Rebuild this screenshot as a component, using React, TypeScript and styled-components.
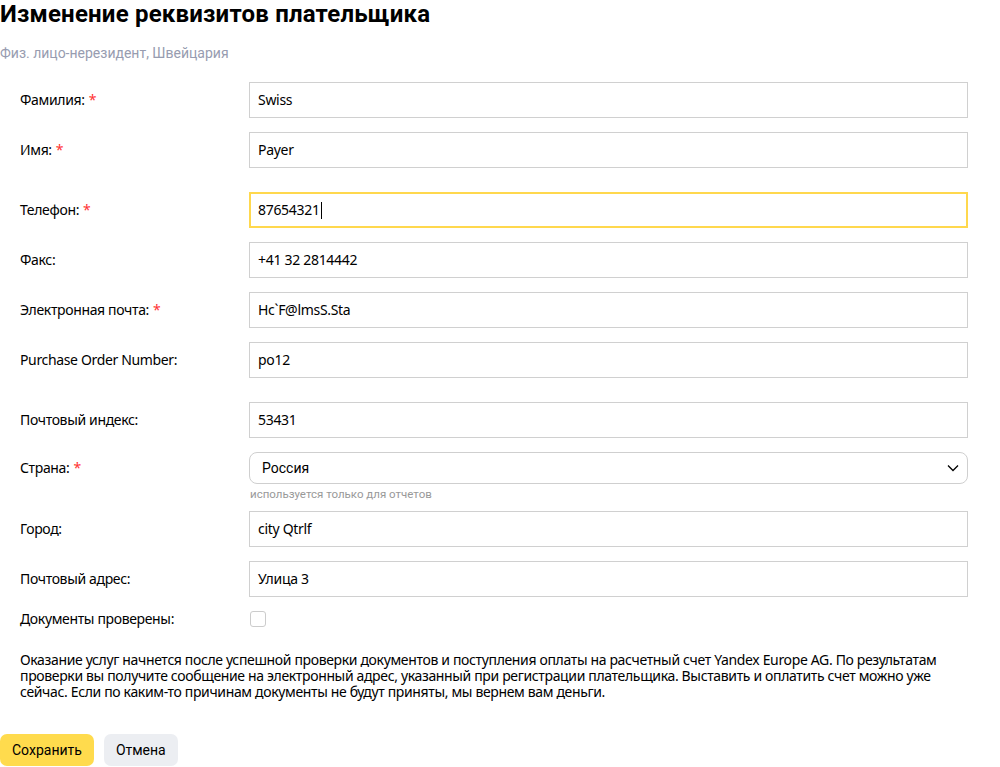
import React from "react";
import styled, { createGlobalStyle } from "styled-components";

const GlobalStyle = createGlobalStyle`
  html, body { margin: 0; padding: 0; background: #fff; }
  body { font-family: "Noto Sans", "Open Sans", sans-serif; color: #000; }
  * { box-sizing: border-box; }
`;

const Page = styled.div`
  width: 968px;
  display: flex;
  flex-direction: column;
`;

const Title = styled.h1`
  margin: 0;
  font-family: Roboto, "Liberation Sans", sans-serif;
  font-weight: 700;
  font-size: 24px;
  line-height: 28px;
  letter-spacing: 0.2px;
`;

const Subtitle = styled.div`
  margin-top: 16px;
  font-family: Roboto, "Liberation Sans", sans-serif;
  font-size: 14px;
  line-height: 18px;
  color: #979cb0;
`;

const Form = styled.div`
  margin-top: 20px;
  display: flex;
  flex-direction: column;
`;

const Row = styled.div<{ $mt: number }>`
  display: grid;
  grid-template-columns: 229px 1fr;
  align-items: start;
  padding-left: 20px;
  margin-top: ${(p) => p.$mt}px;
`;

const Label = styled.div<{ $h: number }>`
  height: ${(p) => p.$h}px;
  display: flex;
  align-items: center;
  font-size: 14px;
  line-height: 18px;
  letter-spacing: -0.35px;
`;

const Req = styled.span`
  color: #ff3333;
  margin-left: 4px;
`;

const TextBox = styled.div<{ $focused?: boolean }>`
  height: 36px;
  display: flex;
  align-items: center;
  border: ${(p) => (p.$focused ? "2px solid #ffd84d" : "1px solid #d0d0d0")};
  padding: 0 ${(p) => (p.$focused ? 7 : 8)}px;
  font-size: 14px;
  line-height: 18px;
  letter-spacing: -0.3px;
  background: #fff;
`;

const Caret = styled.span`
  display: inline-block;
  width: 1px;
  height: 17px;
  background: #000;
  margin-left: 1px;
`;

const SelectCol = styled.div`
  display: flex;
  flex-direction: column;
`;

const Select = styled.div`
  height: 32px;
  border: 1px solid #cfcfcf;
  border-radius: 8px;
  display: flex;
  align-items: center;
  justify-content: space-between;
  padding: 0 8px 0 12px;
  font-family: Roboto, "Liberation Sans", sans-serif;
  font-size: 14px;
`;

const Hint = styled.div`
  margin-top: 3px;
  font-family: Roboto, "Liberation Sans", sans-serif;
  font-size: 11.5px;
  line-height: 14px;
  color: #999;
  padding-left: 1px;
`;

const Checkbox = styled.div`
  width: 16px;
  height: 16px;
  margin-left: 1px;
  border: 1px solid #cccccc;
  border-radius: 3px;
  background: #fff;
`;

const Note = styled.p`
  margin: 25px 0 0;
  padding: 0 20px;
  font-size: 14px;
  line-height: 16px;
  letter-spacing: -0.35px;
`;

const Buttons = styled.div`
  margin-top: 34px;
  display: flex;
  gap: 10px;
`;

const Button = styled.button<{ $primary?: boolean }>`
  height: 32px;
  padding: 0 12px;
  border: none;
  border-radius: 7px;
  font-family: Roboto, "Liberation Sans", sans-serif;
  font-size: 14px;
  color: #000;
  background: ${(p) => (p.$primary ? "#ffdb4d" : "#eceef2")};
  cursor: pointer;
`;

type F = { label: string; value: string; req?: boolean; mt: number; focused?: boolean };

const fieldsA: F[] = [
  { label: "Фамилия:", value: "Swiss", req: true, mt: 0 },
  { label: "Имя:", value: "Payer", req: true, mt: 14 },
  { label: "Телефон:", value: "87654321", req: true, mt: 24, focused: true },
  { label: "Факс:", value: "+41 32 2814442", mt: 14 },
  { label: "Электронная почта:", value: "Hc`F@lmsS.Sta", req: true, mt: 14 },
  { label: "Purchase Order Number:", value: "po12", mt: 14 },
  { label: "Почтовый индекс:", value: "53431", mt: 24 },
];

const fieldsB: F[] = [
  { label: "Город:", value: "city Qtrlf", mt: 10 },
  { label: "Почтовый адрес:", value: "Улица 3", mt: 14 },
];

const FieldRow = ({ f }: { f: F }) => (
  <Row $mt={f.mt}>
    <Label $h={36}>
      {f.label}
      {f.req && <Req>*</Req>}
    </Label>
    <TextBox $focused={f.focused}>
      {f.value}
      {f.focused && <Caret />}
    </TextBox>
  </Row>
);

export default function App() {
  return (
    <Page>
      <GlobalStyle />
      <Title>Изменение реквизитов плательщика</Title>
      <Subtitle>Физ. лицо-нерезидент, Швейцария</Subtitle>
      <Form>
        {fieldsA.map((f) => (
          <FieldRow key={f.label} f={f} />
        ))}
        <Row $mt={14}>
          <Label $h={32}>
            Страна:<Req>*</Req>
          </Label>
          <SelectCol>
            <Select>
              <span>Россия</span>
              <svg width="12" height="8" viewBox="0 0 12 8" fill="none">
                <path d="M1 1.5l5 5 5-5" stroke="#000" strokeWidth="1.3" />
              </svg>
            </Select>
            <Hint>используется только для отчетов</Hint>
          </SelectCol>
        </Row>
        {fieldsB.map((f) => (
          <FieldRow key={f.label} f={f} />
        ))}
        <Row $mt={14}>
          <Label $h={16}>Документы проверены:</Label>
          <Checkbox />
        </Row>
      </Form>
      <Note>
        Оказание услуг начнется после успешной проверки документов и поступления оплаты на
        расчетный счет Yandex Europe AG. По результатам проверки вы получите сообщение на
        электронный адрес, указанный при регистрации плательщика. Выставить и оплатить счет
        можно уже сейчас. Если по каким-то причинам документы не будут приняты, мы вернем вам
        деньги.
      </Note>
      <Buttons>
        <Button $primary>Сохранить</Button>
        <Button>Отмена</Button>
      </Buttons>
    </Page>
  );
}
